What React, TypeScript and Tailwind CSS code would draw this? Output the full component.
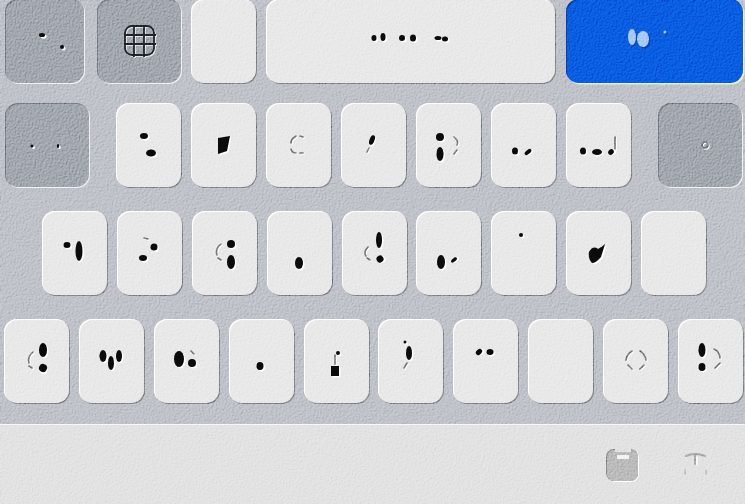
type Mark = [number, number, number, number, number?];

interface KeyProps {
  kind?: "light" | "gray" | "blue";
  className?: string;
  marks?: Mark[];
  paths?: string[];
  faint?: string[];
}

const keyStyles = {
  light: "bg-[#e9e9e9] shadow-[inset_1px_1px_0_#ffffff,1px_1px_0_#85898f]",
  gray: "bg-[#a4a9b0] shadow-[inset_1px_1px_0_#7b8088,1px_1px_0_#f0f1f3]",
  blue: "bg-[#0a5fe2] shadow-[inset_1px_1px_0_#0a3fa8,1.5px_1.5px_0_#f2f2b0]",
};

const Key = ({ kind = "light", className = "w-[65px]", marks = [], paths = [], faint = [] }: KeyProps) => {
  const ink = kind === "blue" ? "#a9cbf5" : "#0b0b0b";
  const lift = kind === "blue" ? "#0a47b8" : "#ffffff";
  return (
    <div className={`relative h-[84px] shrink-0 rounded-[13px] ${keyStyles[kind]} ${className}`}>
      <svg className="absolute inset-0 h-full w-full">
        {faint.map((d) => (
          <g key={d} fill="none" strokeWidth="1.6" strokeLinecap="round">
            <path d={d} stroke="#ffffff" transform="translate(1 1)" />
            <path d={d} stroke="#77797c" />
          </g>
        ))}
        {paths.map((d) => (
          <g key={d}>
            <path d={d} fill={lift} transform="translate(1.5 1.5)" />
            <path d={d} fill={ink} />
          </g>
        ))}
        {marks.map(([cx, cy, rx, ry, rot = 0]) => (
          <g key={`${cx}-${cy}`} transform={`rotate(${rot} ${cx} ${cy})`}>
            <ellipse cx={cx + 1.5} cy={cy + 1.5} rx={rx} ry={ry} fill={lift} />
            <ellipse cx={cx} cy={cy} rx={rx} ry={ry} fill={ink} />
          </g>
        ))}
      </svg>
    </div>
  );
};

const GridGlyph = () => (
  <svg className="absolute left-[123px] top-[23px] h-[36px] w-[34px]" viewBox="0 0 34 36" fill="none">
    <g stroke="#f4f5f6" strokeWidth="1.5" transform="translate(1 1)">
      <rect x="2" y="3" width="29" height="29" rx="7" />
      <path d="M11 2v32M21 2v32M1 12h32M1 21h32" />
    </g>
    <g stroke="#20242a" strokeWidth="1.8">
      <rect x="2" y="3" width="29" height="29" rx="7" />
      <path d="M11 2v32M21 2v32M1 12h32M1 21h32" />
    </g>
  </svg>
);

export default function App() {
  return (
    <div className="relative h-[504px] w-[745px] overflow-hidden bg-[#c0c4ca]">
      <div className="flex h-[424px] flex-col gap-6 pl-[4px] pt-0">
        <div className="-mt-px flex h-[84px] shrink-0 pl-px">
          <Key kind="gray" className="w-[79px]" marks={[[37, 36, 3, 2], [57, 48, 2, 2]]} />
          <Key kind="gray" className="ml-[13px] w-[84px]" />
          <Key className="ml-[10px] w-[65px]" />
          <Key
            className="ml-[10px] w-[289px]"
            marks={[[108, 39, 2.5, 3], [117, 38, 2.5, 4], [136, 39, 3, 3], [147, 39, 3, 3.5], [172, 39, 3.5, 2], [179, 40, 3, 2.5]]}
          />
          <Key
            kind="blue"
            className="ml-[11px] w-[177px]"
            marks={[[66, 38, 4, 8], [77, 40, 6, 8], [99, 33, 1.5, 1.5]]}
          />
        </div>

        <div className="-mt-1 flex h-[84px] shrink-0 pl-px">
          <Key kind="gray" className="w-[84px]" marks={[[27, 43, 1.5, 1.5], [53, 43, 1.2, 2]]} />
          <div className="ml-[27px] flex gap-[10px]">
            <Key marks={[[28, 33, 4, 3], [35, 50, 5, 3.5]]} />
            <Key paths={["M27 35L39 33L36 48L27 51Z"]} />
            <Key faint={["M30 33Q25 36 25 40", "M25 46Q26 50 30 50", "M34 33L37 34", "M34 50L37 50"]} />
            <Key marks={[[31, 37, 2.5, 5, 20]]} faint={["M26 49L28 45"]} />
            <Key marks={[[24, 34, 4, 4], [24, 51, 3.5, 7]]} faint={["M38 34Q43 38 41 42", "M41 47L38 51"]} />
            <Key marks={[[24, 48, 3, 3.5], [37, 49, 4, 2, -40]]} />
            <Key marks={[[17, 48, 3, 3.5], [31, 49, 5, 3], [45, 49, 3, 2.5, -40]]} faint={["M49 34V46"]} />
          </div>
          <Key kind="gray" className="ml-[27px] w-[84px]" faint={["M47 39a3 3 0 1 0 .01 0"]} />
        </div>

        <div className="flex h-[84px] shrink-0 gap-[9.875px] pl-[38px]">
          <Key marks={[[25, 34, 3.5, 3], [37, 40, 3.5, 10]]} />
          <Key marks={[[37, 36, 3.5, 3.5], [26, 47, 4, 3]]} faint={["M27 27L31 28"]} />
          <Key marks={[[39, 33, 4, 4], [39, 51, 4, 7]]} faint={["M29 33Q23 38 25 44", "M26 47L29 49"]} />
          <Key marks={[[32, 52, 4, 6]]} />
          <Key marks={[[37, 29, 3, 8], [38, 48, 3.5, 3.5, -30]]} faint={["M26 36Q21 41 24 45", "M25 47L28 49"]} />
          <Key marks={[[25, 51, 4, 7], [38, 49, 3.5, 1.7, -40]]} />
          <Key marks={[[30, 24, 2, 2]]} />
          <Key paths={["M23 41Q27 34 32 38Q36 36 39 33Q37 40 35 46Q30 52 26 52Q22 48 23 41Z"]} />
          <Key />
        </div>

        <div className="flex h-[84px] shrink-0 gap-[9.9px]">
          <Key marks={[[39, 31, 4, 7], [39, 49, 4, 4, 30]]} faint={["M29 33Q23 38 25 44", "M25 47L28 49"]} />
          <Key marks={[[24, 37, 3.5, 6], [32, 44, 3, 7], [40, 37, 3, 6]]} />
          <Key marks={[[25, 40, 5, 8], [38, 44, 4, 4]]} faint={["M37 32L40 35"]} />
          <Key marks={[[31, 47, 3.5, 4]]} />
          <Key paths={["M27 47H35V57H27Z"]} marks={[[34, 34, 2, 2]]} faint={["M31 36V45"]} />
          <Key marks={[[31, 34, 3, 7], [27, 23, 1.5, 1.5]]} faint={["M26 49L29 44"]} />
          <Key marks={[[26, 33, 3.5, 2.5, -40], [37, 33, 3.5, 3]]} />
          <Key />
          <Key faint={["M29 32Q24 35 23 41", "M25 46L29 50", "M37 32Q42 35 43 41", "M41 46L37 50"]} />
          <Key marks={[[24, 31, 3.5, 7], [24, 48, 3.5, 4]]} faint={["M36 30Q42 33 42 39", "M42 44L37 49"]} />
        </div>
      </div>

      <GridGlyph />

      <div className="flex h-[80px] items-center justify-end gap-[44px] border-t border-[#f8f8f8] bg-[#e3e3e3] pr-[36px]">
        <svg className="h-[34px] w-[34px]" viewBox="0 0 34 34">
          <rect x="2" y="2" width="32" height="32" rx="8" fill="#ffffff" />
          <rect x="1" y="1" width="32" height="32" rx="8" fill="#888b8c" />
          <rect x="2" y="2" width="31" height="31" rx="7" fill="#bcbcbc" />
          <path d="M12 7h12v4H12z" fill="#f3f3f3" />
          <path d="M10 1h16v3H10z" fill="#e3e3e3" />
        </svg>
        <svg className="h-[26px] w-[26px]" viewBox="0 0 26 26" fill="none" strokeLinecap="round">
          <path d="M3 4Q12 0 22 4M12 4V12" stroke="#a8a8a8" strokeWidth="2" />
          <path d="M14 5V13" stroke="#ffffff" strokeWidth="1.5" />
          <path d="M2 22V18M23 22V18" stroke="#bdbdbd" strokeWidth="1.5" />
        </svg>
      </div>

      <svg className="pointer-events-none absolute inset-0 h-full w-full mix-blend-overlay">
        <filter id="grain" x="0" y="0" width="100%" height="100%" colorInterpolationFilters="sRGB">
          <feTurbulence type="fractalNoise" baseFrequency="0.7" numOctaves="3" seed="4" />
          <feDiffuseLighting surfaceScale="1.4" lightingColor="#ffffff" diffuseConstant="0.59">
            <feDistantLight azimuth="225" elevation="58" />
          </feDiffuseLighting>
        </filter>
        <rect width="100%" height="100%" filter="url(#grain)" />
      </svg>
    </div>
  );
}
